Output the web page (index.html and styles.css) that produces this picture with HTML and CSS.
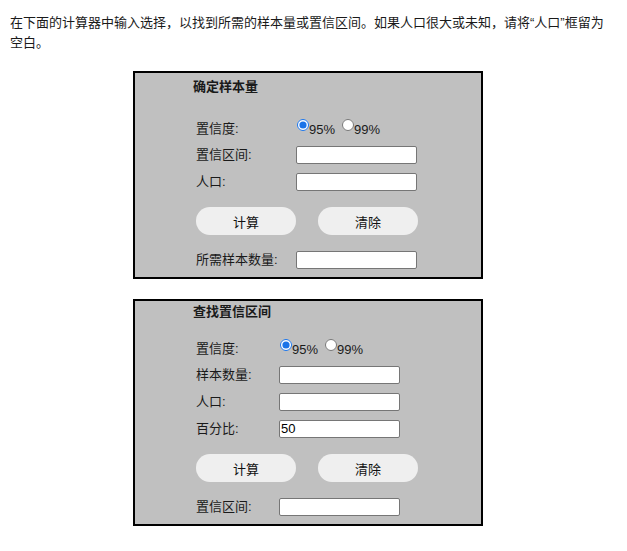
FILE: index.html
```html
<!DOCTYPE html>
<html>
<head>
    <meta charset="utf-8">
    <title>样本量计算器</title>
    <link rel="stylesheet" href="styles.css">
</head>
<body>
    <p class="intro">在下面的计算器中输入选择，以找到所需的样本量或置信区间。如果人口很大或未知，请将“人口”框留为空白。</p>

    <form class="calc calc-size">
        <div class="calc-title">确定样本量</div>
        <div class="row row-radio">
            <label class="row-label">置信度:</label>
            <span class="opts">
                <input type="radio" name="cl1" checked><span class="opt-text">95%</span>
                <input type="radio" name="cl1"><span class="opt-text">99%</span>
            </span>
        </div>
        <div class="row">
            <label class="row-label">置信区间:</label>
            <input type="text" class="field">
        </div>
        <div class="row">
            <label class="row-label">人口:</label>
            <input type="text" class="field">
        </div>
        <div class="buttons">
            <button type="button" class="btn">计算</button>
            <button type="reset" class="btn">清除</button>
        </div>
        <div class="row row-result">
            <label class="row-label">所需样本数量:</label>
            <input type="text" class="field">
        </div>
    </form>

    <form class="calc calc-interval">
        <div class="calc-title">查找置信区间</div>
        <div class="row row-radio">
            <label class="row-label">置信度:</label>
            <span class="opts">
                <input type="radio" name="cl2" checked><span class="opt-text">95%</span>
                <input type="radio" name="cl2"><span class="opt-text">99%</span>
            </span>
        </div>
        <div class="row">
            <label class="row-label">样本数量:</label>
            <input type="text" class="field">
        </div>
        <div class="row">
            <label class="row-label">人口:</label>
            <input type="text" class="field">
        </div>
        <div class="row">
            <label class="row-label">百分比:</label>
            <input type="text" class="field" value="50">
        </div>
        <div class="buttons">
            <button type="button" class="btn">计算</button>
            <button type="reset" class="btn">清除</button>
        </div>
        <div class="row row-result">
            <label class="row-label">置信区间:</label>
            <input type="text" class="field">
        </div>
    </form>
</body>
</html>
```

FILE: styles.css
```css
body {
    margin: 8px;
    background-color: #fff;
    color: #1a1a1a;
    font-family: "Liberation Sans", "Noto Sans CJK SC", sans-serif;
    font-size: 13px;
}

.intro {
    width: 600px;
    margin: 5px 0 18px 2px;
    line-height: 20px;
}

.calc {
    width: 350px;
    box-sizing: border-box;
    margin: 0 0 20px 125px;
    padding: 4px 0 4px 58px;
    background-color: #c0c0c0;
    border: 2px solid #000;
}

.calc-interval {
    padding-top: 1px;
}

.calc-title {
    font-weight: bold;
    line-height: 20px;
    margin-bottom: 18px;
}

.calc-interval .calc-title {
    margin-bottom: 13px;
}

.row {
    display: flex;
    align-items: center;
    height: 27px;
}

.row-radio {
    height: 26px;
    align-items: flex-start;
}

.row-label {
    width: 100px;
    padding-left: 3px;
    line-height: 16px;
}

.calc-interval .row-label {
    width: 83px;
}

.row-radio .row-label {
    margin-top: 6px;
}

.opts {
    display: flex;
    align-items: flex-start;
}

.opts input[type="radio"] {
    width: 12px;
    height: 12px;
    margin: 4px 0 0 1px;
    accent-color: #1a73e8;
}

.opt-text {
    margin-top: 7px;
    line-height: 15px;
    margin-right: 6px;
}

.field {
    width: 121px;
    height: 18px;
    box-sizing: border-box;
    margin: 0;
    padding: 0 1px;
    border: 1px solid #767676;
    border-radius: 2px;
    background-color: #fff;
    font-family: "Liberation Sans", sans-serif;
    font-size: 13px;
    color: #000;
}

.buttons {
    display: flex;
    gap: 22px;
    margin: 12px 0 11px 3px;
}

.btn {
    width: 100px;
    height: 28px;
    border: none;
    border-radius: 14px;
    background-color: #efefef;
    color: #111;
    font-family: "Liberation Sans", "Noto Sans CJK SC", sans-serif;
    font-size: 13px;
    padding: 0;
}
```
